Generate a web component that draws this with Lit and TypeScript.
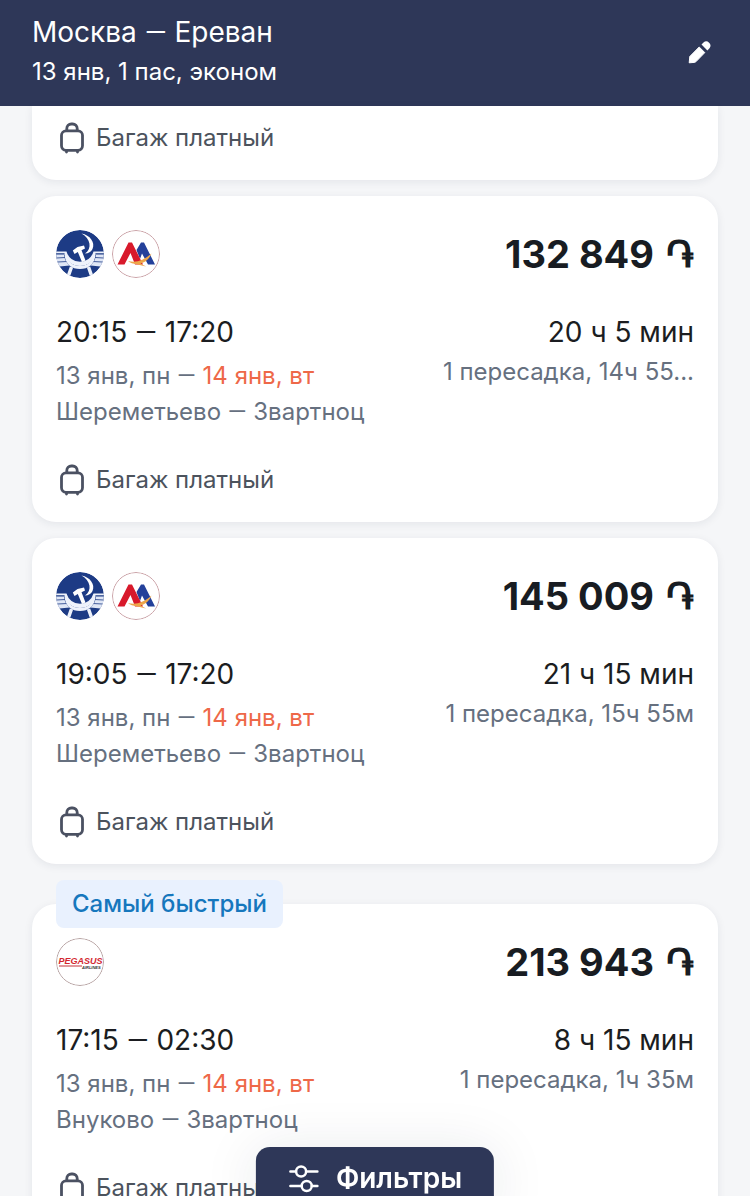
import { LitElement, html, css, svg, nothing } from "lit";
import { customElement, property } from "lit/decorators.js";

type Airline = "aeroflot" | "armenia" | "pegasus";

interface Ticket {
  airlines: Airline[];
  price: string;
  departTime: string;
  arriveTime: string;
  departDate: string;
  arriveDate: string;
  from: string;
  to: string;
  duration: string;
  stops: string;
  badge?: string;
}

const TICKETS: Ticket[] = [
  {
    airlines: ["aeroflot", "armenia"],
    price: "132 849",
    departTime: "20:15",
    arriveTime: "17:20",
    departDate: "13 янв, пн",
    arriveDate: "14 янв, вт",
    from: "Шереметьево",
    to: "Звартноц",
    duration: "20 ч 5 мин",
    stops: "1 пересадка, 14ч 55...",
  },
  {
    airlines: ["aeroflot", "armenia"],
    price: "145 009",
    departTime: "19:05",
    arriveTime: "17:20",
    departDate: "13 янв, пн",
    arriveDate: "14 янв, вт",
    from: "Шереметьево",
    to: "Звартноц",
    duration: "21 ч 15 мин",
    stops: "1 пересадка, 15ч 55м",
  },
  {
    airlines: ["pegasus"],
    price: "213 943",
    departTime: "17:15",
    arriveTime: "02:30",
    departDate: "13 янв, пн",
    arriveDate: "14 янв, вт",
    from: "Внуково",
    to: "Звартноц",
    duration: "8 ч 15 мин",
    stops: "1 пересадка, 1ч 35м",
    badge: "Самый быстрый",
  },
];

// Roboto's em dash is shorter than Inter's, so ranges read less stretched.
const dashStyles = css`
  .dash {
    font-family: Roboto, sans-serif;
    line-height: 1;
  }
`;
const dash = html`<span class="dash">—</span>`;

const logos = {
  aeroflot: svg`
    <circle cx="24" cy="24" r="24" fill="#1d3b85" />
    <path d="M0 21.500H10.500A14 14 0 0 0 37.500 21.500H48V23.300H39.500A15.800 15.800 0 0 1 8.500 23.300H0Z" fill="#eef2fb" />
    <path d="M0 24.500H8A16.500 16.500 0 0 0 13.500 35.500L3.500 36.500A24 24 0 0 1 0 24.500ZM48 24.500H40A16.500 16.500 0 0 1 34.500 35.500L44.500 36.500A24 24 0 0 0 48 24.500Z" fill="#dfe6f5" />
    <path d="M0.500 28L9 27.500M1.500 32L11 31.500M47.500 28L39 27.500M46.500 32L37 31.500" stroke="#1d3b85" stroke-width="0.800" />
    <path d="M10.500 23C11.500 32 17 36 24 36S36.500 32 37.500 23L39.500 24C39 34.500 32 39 24 39S9 34.500 8.500 24Z" fill="#eef2fb" />
    <path d="M15.500 37L12.500 45.500M32.500 37L35.500 45.500" stroke="#eef2fb" stroke-width="3.500" />
    <path d="M25.500 3.500C34 5 39.500 12.500 36.500 19C35 22 32.500 23.300 29 23.500C36.500 18.500 34.500 8.500 25.500 3.500Z" fill="#fff" />
    <path d="M16.800 20.500L21.500 17L28 15.500L29 18.500L25.500 20.300L29.500 30.500L26 32L21.800 22L18.500 24Z" fill="#fff" />`,
  armenia: svg`
    <circle cx="24" cy="24" r="23.500" fill="#fff" stroke="#c9a0a5" stroke-width="1" />
    <path d="M24.500 20L29 12.500H32L43 34.500H36L30 23.500L28 29Z" fill="#24409a" />
    <path d="M5.500 34.500L16.500 12.500H20L31 34.500H23L18.500 23L12.500 34.500Z" fill="#d8192b" />
    <path d="M16 31C24 33 32 30.500 39.500 23.500C37.500 29 33 32.500 28.500 33.500L34 36.500L24.500 34.200C21.500 34 18 32.800 16 31Z" fill="#eda64a" />`,
  pegasus: svg`
    <circle cx="24" cy="24" r="23.500" fill="#fff" stroke="#b6a2a2" stroke-width="1" />
    <text class="logo-name" x="2.500" y="25.500">PEGASUS</text>
    <path d="M3 28H26" stroke="#c5333b" stroke-width="1" />
    <text class="logo-sub" x="26" y="30.500">AIRLINES</text>`,
};

const logoNames: Record<Airline, string> = {
  aeroflot: "Аэрофлот",
  armenia: "Армения",
  pegasus: "Pegasus",
};

@customElement("baggage-row")
export class BaggageRow extends LitElement {
  static styles = css`
    :host {
      display: flex;
      align-items: center;
      gap: 8px;
      font-size: 24px;
      line-height: 36px;
      color: #4c535d;
    }
    .icon {
      width: 32px;
      height: 32px;
      flex: none;
    }
  `;

  render() {
    return html`
      <svg class="icon" viewBox="0 0 32 32" fill="none" stroke="#4b5162" stroke-width="2.800" stroke-linecap="round" aria-hidden="true">
        <rect x="5.500" y="8.800" width="21" height="19.500" rx="4.500" />
        <path d="M10.800 8.500V6.500A4.500 4.500 0 0 1 15.300 2H16.700A4.500 4.500 0 0 1 21.200 6.500V8.500M10.500 28.500V30M21.500 28.500V30" />
      </svg>
      <span>Багаж платный</span>
    `;
  }
}

@customElement("ticket-card")
export class TicketCard extends LitElement {
  @property({ attribute: false }) ticket!: Ticket;

  static styles = [
    dashStyles,
    css`
      :host {
        display: block;
        position: relative;
        padding: 24px;
        border-radius: 24px;
        background: #fff;
        box-shadow: 0 2px 8px rgba(30, 40, 60, 0.08);
      }
      .badge {
        position: absolute;
        top: -24px;
        left: 24px;
        padding: 0 16px;
        border-radius: 8px;
        background: #e9f1fe;
        color: #1677bd;
        font-size: 24px;
        font-weight: 500;
        line-height: 48px;
      }
      .top {
        display: flex;
        align-items: center;
        justify-content: space-between;
        height: 68px;
        margin-bottom: 24px;
      }
      .logos {
        display: flex;
        gap: 8px;
      }
      .logo {
        width: 48px;
        height: 48px;
        border-radius: 50%;
        overflow: hidden;
      }
      .logo-name {
        font: italic bold 9px "Liberation Sans", sans-serif;
        fill: #d32730;
      }
      .logo-sub {
        font: italic bold 4px "Liberation Sans", sans-serif;
        fill: #333;
      }
      .price {
        display: flex;
        align-items: center;
        gap: 12px;
        color: #181c22;
        font-size: 38px;
        font-weight: 700;
        line-height: 48px;
        white-space: nowrap;
      }
      .flight {
        display: flex;
        justify-content: space-between;
        margin-bottom: 32px;
        color: #66707f;
        font-size: 24px;
        line-height: 36px;
        white-space: nowrap;
      }
      .right {
        text-align: right;
      }
      .main {
        color: #1b1d21;
        font-size: 28px;
        line-height: 40px;
      }
      .left .main {
        margin-bottom: 6px;
      }
      .right .main {
        margin-bottom: 2px;
      }
      .next-day {
        color: #ee6848;
      }
    `,
  ];

  render() {
    const t = this.ticket;
    return html`
      ${t.badge ? html`<div class="badge">${t.badge}</div>` : nothing}
      <div class="top">
        <div class="logos">
          ${t.airlines.map(
            (a) => html`<svg class="logo" viewBox="0 0 48 48" role="img" aria-label=${logoNames[a]}>${logos[a]}</svg>`,
          )}
        </div>
        <div class="price"><span>${t.price}</span><span>֏</span></div>
      </div>
      <div class="flight">
        <div class="left">
          <div class="main">${t.departTime} ${dash} ${t.arriveTime}</div>
          <div>${t.departDate} ${dash} <span class="next-day">${t.arriveDate}</span></div>
          <div>${t.from} ${dash} ${t.to}</div>
        </div>
        <div class="right">
          <div class="main">${t.duration}</div>
          <div>${t.stops}</div>
        </div>
      </div>
      <baggage-row></baggage-row>
    `;
  }
}

@customElement("app-root")
export class AppRoot extends LitElement {
  static styles = [
    dashStyles,
    css`
      :host {
        display: block;
        height: 100vh;
        overflow: hidden;
        background: #f5f6f8;
        font-family: Inter, "Noto Sans", sans-serif;
      }
      .header {
        display: flex;
        align-items: center;
        justify-content: space-between;
        padding: 12px 32px 14px;
        background: #2e3758;
        color: #fff;
        font-size: 24px;
        line-height: 40px;
      }
      .title {
        margin: 0;
        font-size: 28px;
        font-weight: 400;
        line-height: 40px;
      }
      .edit {
        display: flex;
        padding: 4px;
        border: 0;
        background: none;
        color: #fff;
      }
      .edit-icon {
        width: 28px;
        height: 28px;
      }
      .list {
        display: flex;
        flex-direction: column;
        gap: 16px;
        padding: 0 32px;
      }
      .previous {
        padding: 14px 24px 24px;
        border-radius: 0 0 24px 24px;
        background: #fff;
        box-shadow: 0 2px 8px rgba(30, 40, 60, 0.08);
      }
      .badged {
        margin-top: 24px;
      }
      .filters {
        position: fixed;
        bottom: -14px;
        left: 50%;
        transform: translateX(-50%);
        display: flex;
        align-items: center;
        gap: 16px;
        padding: 0 32px;
        border: 0;
        border-radius: 14px;
        background: #2e3758;
        box-shadow: 0 4px 56px rgba(30, 40, 60, 0.1);
        color: #fff;
        font-family: inherit;
        font-size: 28px;
        font-weight: 600;
        line-height: 63px;
        white-space: nowrap;
      }
      .filters-icon {
        width: 32px;
        height: 32px;
        flex: none;
      }
    `,
  ];

  render() {
    return html`
      <header class="header">
        <div>
          <h1 class="title">Москва ${dash} Ереван</h1>
          <div>13 янв, 1 пас, эконом</div>
        </div>
        <button class="edit" type="button" aria-label="Изменить">
          <svg class="edit-icon" viewBox="0 0 28 28" fill="currentColor" aria-hidden="true">
            <path d="M3.200 24.800L3.800 18.500L13.200 9L18.800 14.600L9.800 23.800Q9.200 24.300 8.300 24.400Z" stroke="currentColor" stroke-linejoin="round" />
            <path d="M15.500 6.500L17.500 4.500A4.200 4.200 0 0 1 23.500 10.300L21.400 12.400Z" />
          </svg>
        </button>
      </header>
      <main class="list">
        <div class="previous"><baggage-row></baggage-row></div>
        ${TICKETS.map((t) => html`<ticket-card class=${t.badge ? "badged" : ""} .ticket=${t}></ticket-card>`)}
      </main>
      <button class="filters" type="button">
        <svg class="filters-icon" viewBox="0 0 32 32" fill="none" stroke="currentColor" stroke-width="2.500" stroke-linecap="round" aria-hidden="true">
          <path d="M2.500 8.500H8M18.500 8.500H29.500M2.500 23H13.500M24 23H29.500" />
          <circle cx="13.200" cy="8.500" r="5" />
          <circle cx="18.800" cy="23" r="5" />
        </svg>
        <span>Фильтры</span>
      </button>
    `;
  }
}
